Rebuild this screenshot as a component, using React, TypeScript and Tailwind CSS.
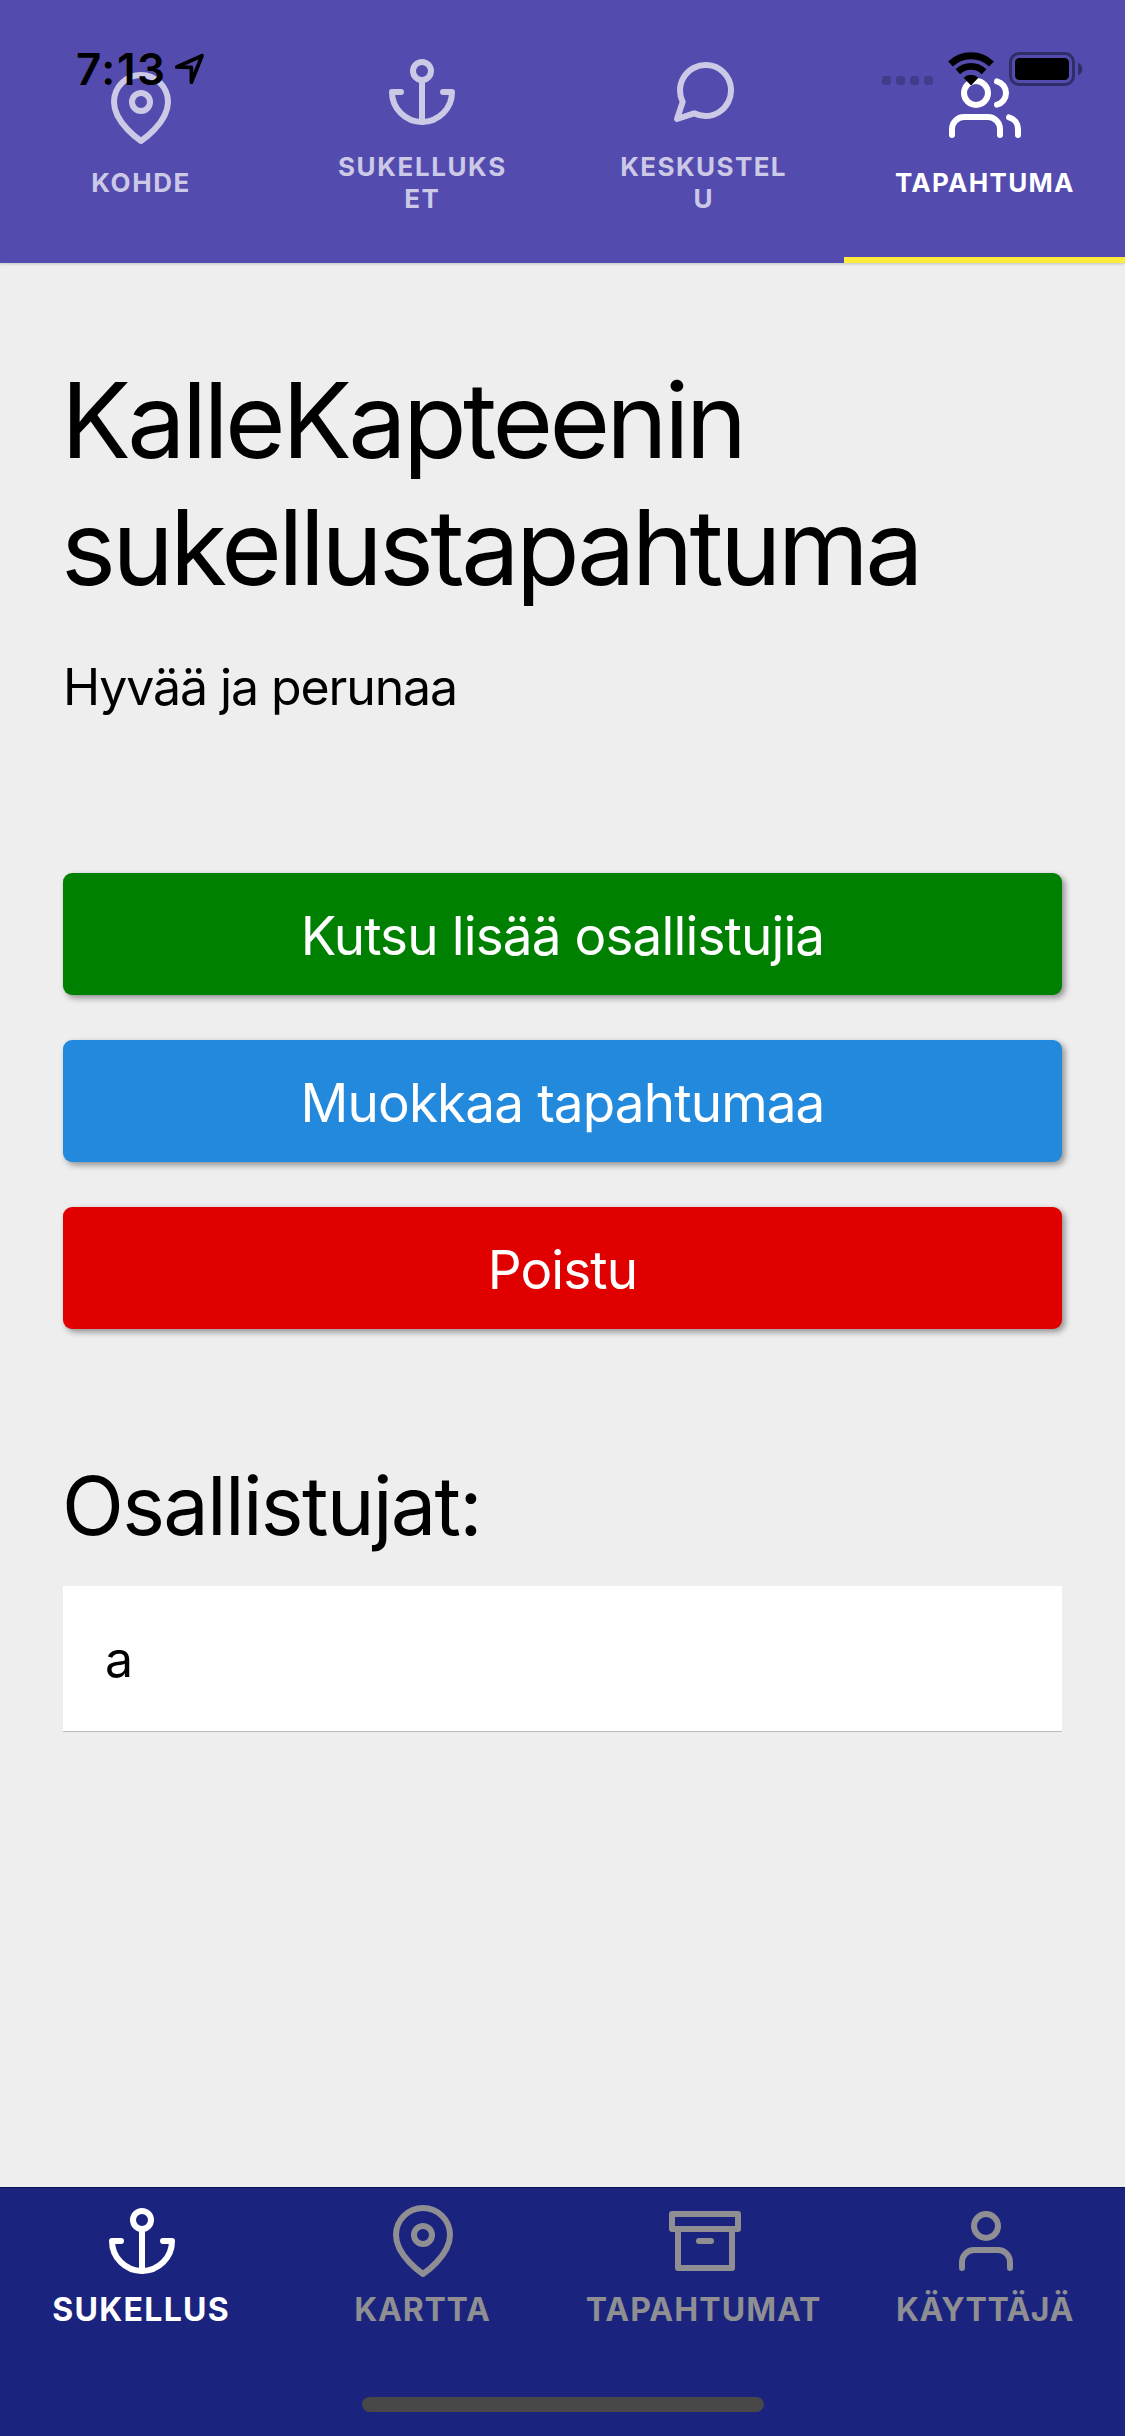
import { FiAnchor, FiArchive, FiMapPin, FiMessageCircle, FiUser, FiUsers } from "react-icons/fi";
import type { IconType } from "react-icons";

type Tab = { label: string; icon: IconType; tracking: string; active?: boolean };

const topTabs: Tab[] = [
  { label: "KOHDE", icon: FiMapPin, tracking: "tracking-[1.6px]" },
  { label: "SUKELLUKSET", icon: FiAnchor, tracking: "tracking-[1.6px]" },
  { label: "KESKUSTELU", icon: FiMessageCircle, tracking: "tracking-[1.4px]" },
  { label: "TAPAHTUMA", icon: FiUsers, tracking: "tracking-[1.3px]", active: true },
];

const bottomTabs: Tab[] = [
  { label: "SUKELLUS", icon: FiAnchor, tracking: "tracking-[1.3px]", active: true },
  { label: "KARTTA", icon: FiMapPin, tracking: "tracking-[0.8px]" },
  { label: "TAPAHTUMAT", icon: FiArchive, tracking: "tracking-[1.05px]" },
  { label: "KÄYTTÄJÄ", icon: FiUser, tracking: "tracking-[0.5px]" },
];

const actions = [
  { label: "Kutsu lisää osallistujia", color: "bg-[#008000]" },
  { label: "Muokkaa tapahtumaa", color: "bg-[#2289dc]" },
  { label: "Poistu", color: "bg-[#e00000]" },
];

function StatusBar() {
  return (
    <div className="absolute inset-x-0 top-0 flex h-[100px] items-start justify-between pl-[76px] pr-[42px] text-black">
      <div className="flex pt-[42px]">
        <span className="w-[98px] text-[44px] leading-[54px] font-semibold tracking-[1.5px]">7:13</span>
        <svg className="mt-[10px] h-[34px] w-[32px]" viewBox="174 52 32 34" fill="none">
          <path
            d="M176.8 67 202 55.7 191.4 82.2V67.4Z"
            stroke="currentColor"
            strokeWidth="3.7"
            strokeLinejoin="round"
          />
        </svg>
      </div>
      <div className="flex pt-[52px]">
        <div className="mt-6 flex gap-[5px]">
          {[0, 1, 2, 3].map((dot) => (
            <span key={dot} className="size-[9px] rounded-[3px] bg-black/20" />
          ))}
        </div>
        <svg className="ml-[15px] h-[34px] w-[46px]" viewBox="948 52 46 34" fill="none">
          <path d="M950.5 63.9A29.8 29.8 0 0 1 991.5 63.9" stroke="currentColor" strokeWidth="6.9" />
          <path d="M957.9 71.7A19 19 0 0 1 984.1 71.7" stroke="currentColor" strokeWidth="6.7" />
          <path d="M971 85.5 963.6 77.7A10.7 10.7 0 0 1 978.4 77.7Z" fill="currentColor" />
        </svg>
        <svg className="ml-[15px] h-[34px] w-[74px]" viewBox="1009 52 74 34">
          <rect
            x="1010.5" y="53.5" width="63" height="31" rx="8.5"
            fill="none" stroke="currentColor" strokeOpacity="0.4" strokeWidth="3"
          />
          <rect x="1015" y="58" width="54" height="22" rx="4.5" fill="currentColor" />
          <path d="M1078 62.7Q1082.3 64.5 1082.3 69T1078 75.3Z" fill="currentColor" fillOpacity="0.4" />
        </svg>
      </div>
    </div>
  );
}

function TopTabs() {
  return (
    <header className="relative h-[263px] shrink-0 bg-[#534bae] shadow-[0_1px_3px_rgba(0,0,0,0.18)]">
      <nav className="grid h-full grid-cols-4">
        {topTabs.map(({ label, icon: Icon, tracking, active }) => (
          <div
            key={label}
            className={`flex flex-col border-b-[6px] pt-[14px] ${
              active ? "border-[#ffeb3b] text-white" : "border-transparent text-[#cbc9e6]"
            }`}
          >
            <div className="flex flex-1 flex-col items-center justify-center pl-px">
              <Icon size={72} />
              <span
                className={`mt-[23px] w-[182px] break-all text-center text-[26px] leading-8 font-bold ${tracking}`}
              >
                {label}
              </span>
            </div>
          </div>
        ))}
      </nav>
      <StatusBar />
    </header>
  );
}

function BottomTabs() {
  return (
    <footer className="flex h-[249px] shrink-0 flex-col border-t border-[#0b1358] bg-[#1a237e]">
      <nav className="grid flex-1 grid-cols-4 pt-[17px]">
        {bottomTabs.map(({ label, icon: Icon, tracking, active }) => (
          <div
            key={label}
            className={`flex flex-col items-center pl-px ${active ? "text-white" : "text-[#8e8e93]"}`}
          >
            <Icon size={72} className="ml-[2px]" />
            <span className={`mt-[13px] text-[32px] leading-[39px] font-bold ${tracking}`}>{label}</span>
          </div>
        ))}
      </nav>
      <div className="mb-6 h-[15px] w-[402px] self-center rounded-full bg-[#484848]" />
    </footer>
  );
}

export default function App() {
  return (
    <div className="flex h-[2436px] w-[1125px] flex-col overflow-hidden bg-[#eeeeee] font-['Inter',sans-serif] text-black">
      <TopTabs />
      <main className="flex-1 px-[63px] pt-[94px]">
        <h1 className="-ml-0.5 w-[960px] text-[104px] leading-[127px] tracking-[-3.65px]">
          KalleKapteenin sukellustapahtuma
        </h1>
        <p className="mt-[46px] text-[50px] leading-[60px] tracking-[-1.1px]">Hyvää ja perunaa</p>
        <div className="mt-[156px] flex flex-col gap-[45px]">
          {actions.map(({ label, color }) => (
            <button
              key={label}
              className={`h-[122px] rounded-[9px] pt-1.5 text-center text-[53px] tracking-[-0.87px] text-white shadow-[3px_3px_6px_rgba(0,0,0,0.4)] ${color}`}
            >
              {label}
            </button>
          ))}
        </div>
        <h2 className="mt-32 -ml-px text-[81px] leading-[98px] tracking-[-1.7px]">Osallistujat:</h2>
        <ul className="mt-[31px]">
          <li className="flex h-[146px] items-center border-b border-[#bcbbc1] bg-white pt-px pl-[42px] text-[50px]">a</li>
        </ul>
      </main>
      <BottomTabs />
    </div>
  );
}
